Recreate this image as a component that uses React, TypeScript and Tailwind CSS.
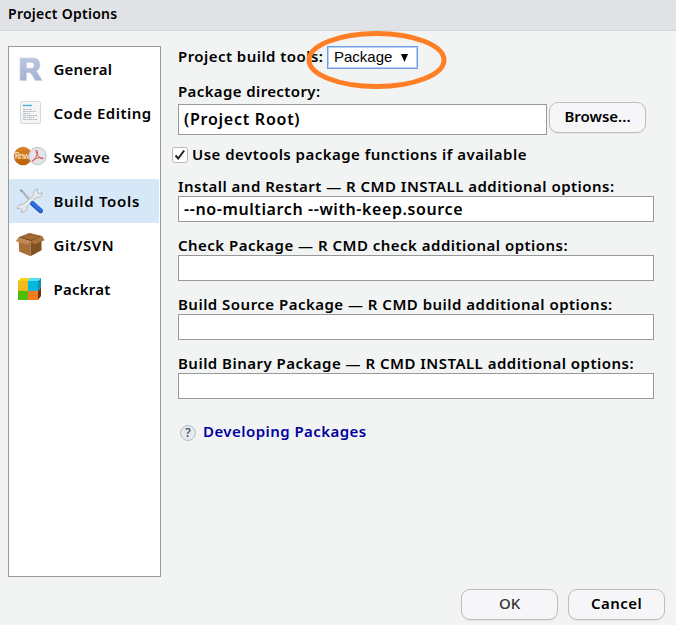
import type { ReactNode } from "react";

function RLogo() {
  return (
    <svg width="34" height="28" viewBox="0 0 34 28">
      <defs>
        <linearGradient id="rg" x1="0" y1="0" x2="0" y2="1">
          <stop offset="0" stopColor="#b9c5e2" />
          <stop offset="1" stopColor="#a4b2d6" />
        </linearGradient>
      </defs>
      <path fillRule="evenodd" d="M7 3h13q7 0 7 7 0 4.500-4 6.200 1.400.8 2.300 2.800l4 6.500h-7l-3.800-6.300q-.8-1.500-2.300-1.500H13.500v7.800H7zM13.500 7.500v5.700h5q2.700 0 2.700-2.900t-2.700-2.800z" fill="url(#rg)" stroke="#cdd3df" strokeWidth=".7" />
    </svg>
  );
}

function PageIcon() {
  return (
    <svg width="34" height="28" viewBox="0 0 34 28">
      <rect x="7.500" y="2.500" width="20" height="22" rx="1" fill="#f3f5f6" stroke="#d9dcde" />
      <path d="M10 6.500h9" stroke="#35a9d9" strokeWidth="1.500" strokeDasharray="2.500 .4" />
      <path d="M10 10.500h9M10 12.500h13M10 14.500h7M10 16.500h14M10 18.500h12M10 20.500h14" stroke="#a5acb0" strokeWidth=".8" strokeDasharray="3 .7 1.500 .6" />
    </svg>
  );
}

function SweaveIcon() {
  return (
    <svg width="34" height="28" viewBox="0 0 34 28">
      <defs>
        <linearGradient id="sw" x1="0" y1="0" x2="0" y2="1">
          <stop offset="0" stopColor="#d9862a" />
          <stop offset="1" stopColor="#bd5e08" />
        </linearGradient>
      </defs>
      <circle cx="10" cy="13" r="9.200" fill="url(#sw)" />
      <text x="1.800" y="16" fontSize="8" fontFamily="Noto Sans, sans-serif" fontWeight="500" fill="#fbe8cf" textLength="15">Rnw</text>
      <circle cx="24.500" cy="13" r="8.600" fill="#e3e5ea" stroke="#b9bdc6" />
      <path d="M23.200 7q2 .2 1 4.200-1.800 6-4.500 7.300-1.200-.6 1.500-2.300 4.500-2.300 9-1.200.3 1.500-2.500.2-3.300-2-4.300-5.200-.7-2-.2-3z" fill="none" stroke="#dc5850" strokeWidth="1" />
    </svg>
  );
}

function ToolsIcon() {
  return (
    <svg width="34" height="28" viewBox="0 0 34 28">
      <path d="m8.500 3.500 10 11.500" stroke="#aeb2b8" strokeWidth="2.200" />
      <path d="m7 3 2 1" stroke="#858b93" strokeWidth="1.500" />
      <path d="M24.600 1.700q-3.800.7-4.200 3.700 0 1.400.5 2.400l-10.400 9.300q-3-.5-4.700 1.300-1.800 1.500-1.600 3.400l3.200-.7 1.800 1.500-.8 2.800q4.200.1 5.300-2.900.6-1.300.1-2.800l9.800-9.300q3 .6 4.600-1.400 1.300-1.700 1-3.200l-3.200 1-2-1.700z" fill="#e7e8ea" stroke="#b0b4b9" strokeWidth=".9" />
      <path d="m19.500 16.500 8 7.300" stroke="#1549b5" strokeWidth="4.800" strokeLinecap="round" />
      <path d="m19.500 16 8 7.300" stroke="#2e70e4" strokeWidth="3.200" strokeLinecap="round" />
    </svg>
  );
}

function BoxIcon() {
  return (
    <svg width="34" height="28" viewBox="0 0 34 28">
      <path d="m5.500 6.500 11-4.300 13.300 3.300-11.500 5z" fill="#704118" />
      <path d="m8 6.200 8.500-3 10 2.600-8.200 3.300z" fill="#a66c35" />
      <path d="M5.500 7.500 17.500 11v14.300L6.200 20.500z" fill="#a76e38" />
      <path d="m17.500 11 11-4.500v12.700l-11 6.100z" fill="#835022" />
      <path d="m5.500 6.300-2.700 4 11.700 3.500 3-3.600z" fill="#bf8751" />
      <path d="m17.500 10.200 3.800 3.300 10.200-4.300-2.500-4.500z" fill="#aa713b" />
      <path d="m5.500 6.300 11-4.100 13 3.300" fill="none" stroke="#c18d5a" strokeWidth=".8" />
    </svg>
  );
}

function PackratIcon() {
  return (
    <svg width="34" height="28" viewBox="0 0 34 28">
      <path d="m5 6 3-3h9l-2 3z" fill="#f1d500" />
      <path d="m15 6 2-3h11l-3 3z" fill="#4ee4f8" />
      <path d="m25 6 3-3v9l-3 4z" fill="#168fae" />
      <path d="m25 16 3-4v9l-3 4z" fill="#71310c" />
      <path d="M5 6h10v10H5z" fill="#f4b821" />
      <path d="M15 6h10v10H15z" fill="#06b8df" />
      <path d="M5 16h10v9H5z" fill="#4dbd08" />
      <path d="M15 16h10v9H15z" fill="#f67c20" />
    </svg>
  );
}

function NavItem({ icon, label, tracking, active = false }: { icon: ReactNode; label: string; tracking: string; active?: boolean }) {
  return (
    <div className={`mr-px flex h-11 items-center pl-1 ${active ? "bg-[#d6e8f7]" : ""}`}>
      {icon}
      <span className={`ml-[6.5px] ${tracking}`}>{label}</span>
    </div>
  );
}

function OptionField({ label, value = "" }: { label: string; value?: string }) {
  return (
    <div className="h-[59px]">
      <div className="h-5 leading-5 tracking-[0.48px]">{label}</div>
      <div className="h-[26px] w-[476px] border border-[#999] bg-white pl-[5px] text-base leading-[24px] tracking-[0.6px]">{value}</div>
    </div>
  );
}

const buttonClass = "flex h-[31px] w-[97px] items-center justify-center rounded-[9px] border border-[#bdbdbf] bg-[#f6f6f9] pb-0.5 shadow-[0_1px_1px_#e4e6e6]";

export default function App() {
  return (
    <div className="flex h-[625px] w-[676px] flex-col overflow-hidden whitespace-nowrap bg-[#f2f4f4] font-['Noto_Sans',sans-serif] text-[15px] font-semibold text-black">
      <header className="h-[31px] border-b border-[#d5d6da] bg-[#e1e2e6] pl-2 text-sm leading-7 tracking-[0.27px]">Project Options</header>
      <div className="flex">
        <nav className="ml-2 mt-[15px] h-[531px] w-[153px] border border-[#999] bg-white">
          <NavItem icon={<RLogo />} label="General" tracking="tracking-[0.2px]" />
          <NavItem icon={<PageIcon />} label="Code Editing" tracking="tracking-[0.5px]" />
          <NavItem icon={<SweaveIcon />} label="Sweave" tracking="tracking-[0.2px]" />
          <NavItem icon={<ToolsIcon />} label="Build Tools" tracking="tracking-[0.7px]" active />
          <NavItem icon={<BoxIcon />} label="Git/SVN" tracking="tracking-[0.55px]" />
          <NavItem icon={<PackratIcon />} label="Packrat" tracking="tracking-[0.25px]" />
        </nav>
        <main className="ml-[17px] mt-[15px] w-[480px]">
          <div className="relative flex h-[34px]">
            <span className="w-[149px] leading-5 tracking-[0.45px]">Project build tools:</span>
            <div className="flex h-[23px] w-[91px] items-center border border-[#6d9ce8] bg-white pl-[6px] font-['Liberation_Sans',sans-serif] text-[15px] font-normal shadow-[inset_0_0_0_1px_#b9cff3]">
              <span className="w-[67px]">Package</span>
              <svg width="7" height="8" viewBox="0 0 7 8"><path d="M0 0h7L3.500 8z" /></svg>
            </div>
            <svg className="absolute left-[127px] top-[-16px]" width="144" height="60" viewBox="0 0 144 60">
              <ellipse cx="71.500" cy="30" rx="67.500" ry="26.500" fill="none" stroke="#ff7f27" strokeWidth="5" />
            </svg>
          </div>
          <div className="h-[23px] leading-[22px] tracking-[0.38px]">Package directory:</div>
          <div className="flex h-[42px] gap-[2px]">
            <div className="mt-px h-[31px] w-[369px] border border-[#999] bg-white pl-[5px] text-base leading-[28px] tracking-[0.75px]">(Project Root)</div>
            <div className={`${buttonClass} -mt-px`}>Browse...</div>
          </div>
          <div className="-ml-1.5 flex h-[31px] items-start">
            <svg className="mt-[2px]" width="16" height="16" viewBox="0 0 16 16">
              <rect x=".5" y=".5" width="15" height="15" rx="2" fill="#fff" stroke="#b5b6b8" />
              <path d="m3.500 8.500 2.700 3 6-8" fill="none" stroke="#222" strokeWidth="2" />
            </svg>
            <span className="ml-1 leading-[18px] tracking-[0.47px]">Use devtools package functions if available</span>
          </div>
          <OptionField label="Install and Restart — R CMD INSTALL additional options:" value="--no-multiarch --with-keep.source" />
          <OptionField label="Check Package — R CMD check additional options:" />
          <OptionField label="Build Source Package — R CMD build additional options:" />
          <OptionField label="Build Binary Package — R CMD INSTALL additional options:" />
          <div className="mt-[7px] flex h-6 items-center text-[#0000a0]">
            <svg className="ml-[1px] mt-[3px]" width="18" height="18" viewBox="0 0 18 18">
              <circle cx="9" cy="9" r="7.500" fill="#e7eaec" stroke="#b8c1c7" />
              <text x="9" y="13" textAnchor="middle" fontFamily="Noto Sans, sans-serif" fontSize="12" fontWeight="600" fill="#4d5860">?</text>
            </svg>
            <span className="ml-[6px] tracking-[0.45px]">Developing Packages</span>
          </div>
        </main>
      </div>
      <footer className="ml-[461px] mt-3 flex gap-[10px]">
        <div className={`${buttonClass} font-medium text-[#333]`}>OK</div>
        <div className={`${buttonClass} tracking-[0.45px]`}>Cancel</div>
      </footer>
    </div>
  );
}
